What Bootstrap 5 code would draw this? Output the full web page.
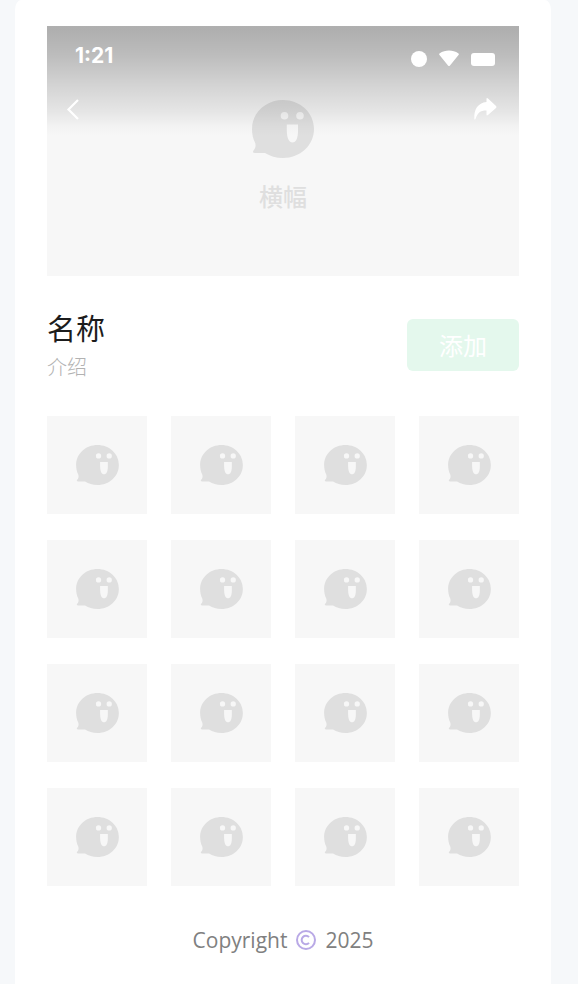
<!DOCTYPE html>
<html lang="zh-CN">
<head>
<meta charset="utf-8">
<meta name="viewport" content="width=device-width, initial-scale=1">
<title>名称</title>
<link href="https://cdn.jsdelivr.net/npm/bootstrap@5.3.0/dist/css/bootstrap.min.css" rel="stylesheet">
<style>
body{background:#f6f8fa;font-family:"Noto Sans","Noto Sans CJK SC",sans-serif}
.sheet{margin:0 27px 0 15px;padding:26px 32px 32px;min-height:100vh;background:#fff;border-radius:6px 6px 0 0/10px 10px 0 0}
.hero{height:250px;background:#f7f7f7;color:#dfdfdf}
.shade{height:110px;background:linear-gradient(rgba(0,0,0,.29) 0,rgba(0,0,0,.29) 5px,rgba(0,0,0,.235) 30px,rgba(0,0,0,.15) 58px,rgba(0,0,0,.07) 86px,rgba(0,0,0,.02) 100px,transparent)}
.status-bar{padding:16px 24px 0 28px;height:60px}
.clock{font:700 21px/28px Inter,sans-serif}
.tool-bar{padding:10px 22px 0 18px}
.status-icons{gap:12px;padding-top:4px;height:30px}
.banner-mark{padding-top:74px}
.banner-text{font-size:24px;line-height:36px;margin-top:21px;font-weight:500}
.intro{margin-top:33px}
.intro h1{font-size:29px;line-height:40px;color:#1c1c1c;font-weight:400}
.intro p{font-size:20px;line-height:38px;color:#b2b2b2;font-weight:300}
.add-btn{width:112px;height:52px;padding:2px 0 0;font-size:24px;border:0;border-radius:6px;margin-top:10px;--bs-btn-bg:#e4f8ed;--bs-btn-color:#fff;--bs-btn-hover-bg:#d8f4e5;--bs-btn-hover-color:#fff}
.tiles{--bs-gutter-x:24px;--bs-gutter-y:26px;margin-top:3px}
.tile{aspect-ratio:100/98;background:#f7f7f7;color:#dfdfdf}
.legal{margin-top:36px;gap:9px;font:400 21px/36px "Open Sans",sans-serif;color:#808080}
</style>
<script src="https://cdn.jsdelivr.net/npm/bootstrap@5.3.0/dist/js/bootstrap.bundle.min.js"></script>
</head>
<body>
<svg class="d-none" aria-hidden="true"><symbol id="face" viewBox="0 0 62 58"><path fill="currentColor" fill-rule="evenodd" d="M31 0C48 0 62 12.500 62 29S48 58 31 58C24 58 18 56 13 53H3Q0 53 1.500 50.500C3.500 48 4 46 3.200 43C1 39 0 34 0 29C0 12.500 14 0 31 0ZM32.500 12a3.800 3.800 0 1 0 0 7.600a3.800 3.800 0 1 0 0-7.600ZM48 12a3.800 3.800 0 1 0 0 7.600a3.800 3.800 0 1 0 0-7.600ZM34.800 24.500V31C35 38 37 42.500 40.500 42.500S46 38 46 31V24.500Z"/></symbol></svg>
<main class="sheet">
  <header class="hero position-relative">
    <div class="banner-mark text-center">
      <svg class="d-block mx-auto" width="62" height="58" aria-hidden="true"><use href="#face"/></svg>
      <div class="banner-text">横幅</div>
    </div>
    <div class="shade position-absolute top-0 start-0 w-100 text-white">
      <div class="status-bar d-flex justify-content-between">
        <span class="clock">1:21</span>
        <div class="status-icons d-flex align-items-center" aria-hidden="true">
          <svg width="16" height="16"><circle cx="8" cy="8" r="8" fill="#fff"/></svg>
          <svg width="20" height="18"><path fill="#fff" d="M.5 5C0 4.300 0 3.800 .8 3.300C6-.3 14-.3 19.200 3.300C20 3.800 20 4.300 19.500 5L11 15.500Q10 16.700 9 15.500Z"/></svg>
          <svg width="24" height="13"><rect width="24" height="13" rx="3" fill="#fff"/></svg>
        </div>
      </div>
      <nav class="tool-bar d-flex justify-content-between">
        <button type="button" class="btn p-0 border-0 lh-1 d-flex" aria-label="返回"><svg width="15" height="26" fill="none" stroke="#fff" stroke-width="2.200"><path d="M13 4L3.500 13.500L13 23"/></svg></button>
        <button type="button" class="btn p-0 border-0 lh-1 d-flex" aria-label="分享"><svg width="24" height="26" fill="#fff"><path d="M13.500 3Q13.500 1.200 15 2.500L23 10Q24 11 23 12L15 19Q13.500 20.200 13.500 18.500V14.500C7 14.500 4.500 17 2.500 23Q1.500 24.500 1.300 22.500C1 13 5 7 13.500 6Z"/></svg></button>
      </nav>
    </div>
  </header>
  <section class="intro d-flex justify-content-between align-items-start">
    <div><h1 class="m-0">名称</h1><p class="mb-0">介绍</p></div>
    <button type="button" class="btn add-btn">添加</button>
  </section>
  <section class="tiles row row-cols-4">
    <div class="col"><div class="tile d-flex align-items-center justify-content-center"><svg width="43" height="40"><use href="#face"/></svg></div></div>
    <div class="col"><div class="tile d-flex align-items-center justify-content-center"><svg width="43" height="40"><use href="#face"/></svg></div></div>
    <div class="col"><div class="tile d-flex align-items-center justify-content-center"><svg width="43" height="40"><use href="#face"/></svg></div></div>
    <div class="col"><div class="tile d-flex align-items-center justify-content-center"><svg width="43" height="40"><use href="#face"/></svg></div></div>
    <div class="col"><div class="tile d-flex align-items-center justify-content-center"><svg width="43" height="40"><use href="#face"/></svg></div></div>
    <div class="col"><div class="tile d-flex align-items-center justify-content-center"><svg width="43" height="40"><use href="#face"/></svg></div></div>
    <div class="col"><div class="tile d-flex align-items-center justify-content-center"><svg width="43" height="40"><use href="#face"/></svg></div></div>
    <div class="col"><div class="tile d-flex align-items-center justify-content-center"><svg width="43" height="40"><use href="#face"/></svg></div></div>
    <div class="col"><div class="tile d-flex align-items-center justify-content-center"><svg width="43" height="40"><use href="#face"/></svg></div></div>
    <div class="col"><div class="tile d-flex align-items-center justify-content-center"><svg width="43" height="40"><use href="#face"/></svg></div></div>
    <div class="col"><div class="tile d-flex align-items-center justify-content-center"><svg width="43" height="40"><use href="#face"/></svg></div></div>
    <div class="col"><div class="tile d-flex align-items-center justify-content-center"><svg width="43" height="40"><use href="#face"/></svg></div></div>
    <div class="col"><div class="tile d-flex align-items-center justify-content-center"><svg width="43" height="40"><use href="#face"/></svg></div></div>
    <div class="col"><div class="tile d-flex align-items-center justify-content-center"><svg width="43" height="40"><use href="#face"/></svg></div></div>
    <div class="col"><div class="tile d-flex align-items-center justify-content-center"><svg width="43" height="40"><use href="#face"/></svg></div></div>
    <div class="col"><div class="tile d-flex align-items-center justify-content-center"><svg width="43" height="40"><use href="#face"/></svg></div></div>
  </section>
  <footer class="legal d-flex justify-content-center align-items-center">
    <span>Copyright</span>
    <svg width="20" height="20" fill="none" stroke="#b9a9e6" stroke-width="2" role="img" aria-label="©"><circle cx="10" cy="10" r="9"/><path d="M13 7.200A4.200 4.200 0 1 0 13 12.800"/></svg>
    <span>2025</span>
  </footer>
</main>
</body>
</html>
